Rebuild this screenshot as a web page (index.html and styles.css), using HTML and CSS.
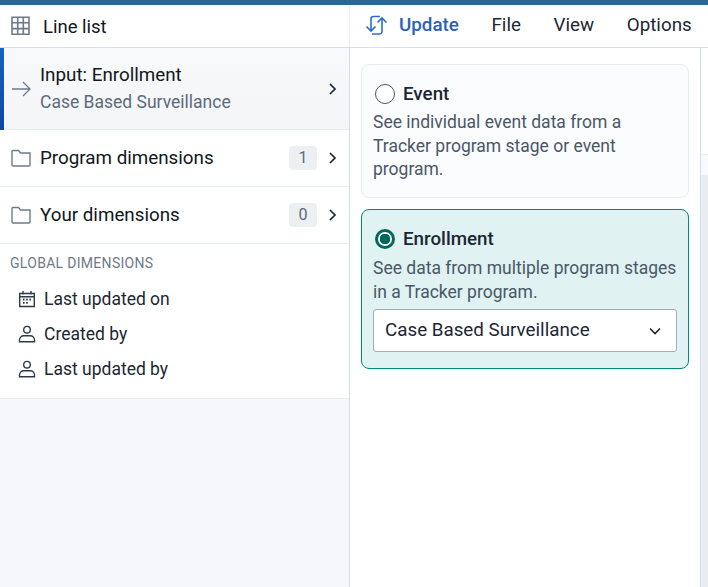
FILE: index.html
```html
<!DOCTYPE html>
<html>
<head>
<title>Line list</title>
<link rel="stylesheet" href="styles.css">
</head>
<body>
<div class="topbar"></div>
<div class="toolbar">
    <div class="toolbar-left">
        <svg class="icon-grid" width="20" height="20" viewBox="0 0 20 20" fill="none" stroke="#6e7a8a" stroke-width="1.6">
            <path d="M1 1.200h17v17H1zM1 6.800h17M1 12.600h17M6.700 1.200v17M12.300 1.200v17"/>
        </svg>
        <span class="app-name">Line list</span>
    </div>
    <div class="toolbar-right">
        <button class="menu-btn update">
            <svg width="24" height="24" viewBox="0 0 24 24" fill="none" stroke="#2c6ecb" stroke-width="1.6">
                <path d="M6 18V6a2.500 2.500 0 0 1 2.500-2.500H15M1.500 13.500L6 18l4.500-4.500M17 5v13.500a2.500 2.500 0 0 1-2.500 2.500H7M12.500 9.500L17 5l4.500 4.500"/>
            </svg>
            Update
        </button>
        <button class="menu-btn">File</button>
        <button class="menu-btn">View</button>
        <button class="menu-btn">Options</button>
    </div>
</div>
<div class="content">
    <div class="sidebar">
        <div class="row row-input">
            <svg class="row-icon" width="22" height="22" viewBox="0 0 22 22" fill="none" stroke="#6e7a8a" stroke-width="1.300">
                <path d="M1 11h18M12 4l7 7-7 7"/>
            </svg>
            <div class="row-text">
                <div class="row-title">Input: Enrollment</div>
                <div class="row-sub">Case Based Surveillance</div>
            </div>
            <svg class="chevron" width="10" height="14" viewBox="0 0 10 14" fill="none" stroke="#1b2733" stroke-width="1.700"><path d="M2 2l5 5-5 5"/></svg>
        </div>
        <div class="row row-dim">
            <svg class="row-icon" width="20" height="18" viewBox="0 0 20 18" fill="none" stroke="#6e7a8a" stroke-width="1.400"><path d="M1 16V2.500a1 1 0 0 1 1-1h5.500l2 2.500H19v12a1 1 0 0 1-1 1H2a1 1 0 0 1-1-1z"/></svg>
            <div class="row-text"><div class="row-title">Program dimensions</div></div>
            <span class="badge">1</span>
            <svg class="chevron" width="10" height="14" viewBox="0 0 10 14" fill="none" stroke="#1b2733" stroke-width="1.700"><path d="M2 2l5 5-5 5"/></svg>
        </div>
        <div class="row row-dim">
            <svg class="row-icon" width="20" height="18" viewBox="0 0 20 18" fill="none" stroke="#6e7a8a" stroke-width="1.400"><path d="M1 16V2.500a1 1 0 0 1 1-1h5.500l2 2.500H19v12a1 1 0 0 1-1 1H2a1 1 0 0 1-1-1z"/></svg>
            <div class="row-text"><div class="row-title">Your dimensions</div></div>
            <span class="badge">0</span>
            <svg class="chevron" width="10" height="14" viewBox="0 0 10 14" fill="none" stroke="#1b2733" stroke-width="1.700"><path d="M2 2l5 5-5 5"/></svg>
        </div>
        <div class="global">
            <div class="global-title">GLOBAL DIMENSIONS</div>
            <div class="global-item">
                <svg width="18" height="18" viewBox="0 0 18 18" fill="none" stroke="#2c3a49" stroke-width="1.400"><path d="M1.700 3.500h14.600v13H1.700zM1.700 6.800h14.600M5 1v3.500M13 1v3.500"/><path d="M5 9.500h1.600M8.200 9.500h1.600M11.400 9.500h1.600M5 12.800h1.600M8.200 12.800h1.600" stroke-width="1.800"/></svg>
                Last updated on
            </div>
            <div class="global-item">
                <svg width="18" height="18" viewBox="0 0 18 18" fill="none" stroke="#2c3a49" stroke-width="1.400"><circle cx="9" cy="4.700" r="3.300"/><path d="M1.500 16.800v-1.800c0-2.500 2-4.300 4.300-4.300h6.400c2.300 0 4.300 1.800 4.300 4.300v1.800z"/></svg>
                Created by
            </div>
            <div class="global-item">
                <svg width="18" height="18" viewBox="0 0 18 18" fill="none" stroke="#2c3a49" stroke-width="1.400"><circle cx="9" cy="4.700" r="3.300"/><path d="M1.500 16.800v-1.800c0-2.500 2-4.300 4.300-4.300h6.400c2.300 0 4.300 1.800 4.300 4.300v1.800z"/></svg>
                Last updated by
            </div>
        </div>
    </div>
    <div class="panel">
        <div class="card">
            <div class="card-head"><span class="radio"></span>Event</div>
            <div class="card-desc">See individual event data from a Tracker program stage or event program.</div>
        </div>
        <div class="card card-selected">
            <div class="card-head"><span class="radio radio-on"></span>Enrollment</div>
            <div class="card-desc">See data from multiple program stages in a Tracker program.</div>
            <div class="select">
                <span class="select-text">Case Based Surveillance</span>
                <svg width="14" height="10" viewBox="0 0 14 10" fill="none" stroke="#1b2733" stroke-width="1.600"><path d="M2 2.500l5 5 5-5"/></svg>
            </div>
        </div>
    </div>
    <div class="canvas">
        <div class="canvas-top"></div>
        <div class="canvas-band"></div>
        <div class="canvas-rest"></div>
    </div>
</div>
</body>
</html>
```

FILE: styles.css
```css
* {
    box-sizing: border-box;
}
html, body {
    height: 100%;
}
body {
    margin: 0;
    font-family: Roboto, "Liberation Sans", sans-serif;
    font-size: 18.8px;
    color: #1b2733;
    background-color: #fff;
    display: flex;
    flex-direction: column;
    overflow: hidden;
}
.topbar {
    height: 5px;
    background-color: #2b6793;
}
.toolbar {
    display: flex;
    height: 43px;
    border-bottom: 1px solid #d5dde8;
}
.toolbar-left {
    width: 350px;
    display: flex;
    align-items: center;
    border-right: 1px solid #e8edf2;
    padding-left: 11px;
    gap: 12px;
}
.app-name {
    color: #0f1720;
    font-size: 18.5px;
    padding-top: 2px;
}
.toolbar-right {
    flex: 1;
    display: flex;
    align-items: center;
    padding: 0 0 3px 15px;
    gap: 32.600px;
}
.menu-btn {
    border: 0;
    padding: 0;
    background: none;
    font-family: inherit;
    font-size: 18.8px;
    color: #1b2733;
    display: flex;
    align-items: center;
    gap: 10px;
}
.menu-btn.update {
    color: #2c62b5;
    font-weight: 500;
}
.content {
    flex: 1;
    display: flex;
    min-height: 0;
}
.sidebar {
    width: 350px;
    background-color: #f5f7fa;
    border-right: 1px solid #d5dde8;
}
.row {
    display: flex;
    align-items: center;
    background-color: #fff;
    border-bottom: 1px solid #e8edf2;
    padding: 0 11px;
}
.row-input {
    height: 82px;
    background: linear-gradient(#f8f9fa, #f3f5f7);
    border-left: 4px solid;
    border-image: linear-gradient(#1565c0, #0d47a1) 1;
    border-bottom: 0;
    box-shadow: inset 0 -1px 0 #e8edf2;
    padding-left: 7px;
}
.row-dim {
    height: 57px;
}
.row-icon {
    flex: none;
    margin-right: 9px;
}
.row-text {
    flex: 1;
}
.row-title {
    color: #0f1720;
}
.row-sub {
    margin-top: 6px;
    font-size: 17.5px;
    color: #5c6b7c;
}
.row-input .row-text {
    padding-bottom: 2px;
}
.row-input .row-icon {
    margin-right: 7px;
}
.badge {
    width: 28px;
    height: 24px;
    line-height: 24px;
    text-align: center;
    font-size: 16px;
    color: #5c6b7c;
    background-color: #ecf0f3;
    border-radius: 4px;
    margin-right: 11px;
}
.chevron {
    flex: none;
}
.global {
    background-color: #fff;
    border-bottom: 1px solid #e8edf2;
    padding: 11px 10px 12px;
}
.global-title {
    font-size: 14px;
    color: #6e7a8a;
    letter-spacing: 0.3px;
    margin-bottom: 10px;
}
.global-item {
    display: flex;
    align-items: center;
    gap: 8px;
    height: 35px;
    padding-left: 8px;
    font-size: 17.5px;
    color: #1b2733;
}
.panel {
    width: 351px;
    border-right: 1px solid #d5dde8;
    padding: 16px 11px;
}
.card {
    border: 1px solid #e8edf2;
    border-radius: 8px;
    background-color: #fbfcfd;
    padding: 17px 11px 0;
    margin-bottom: 11px;
    height: 134px;
}
.card-selected {
    height: 160px;
    background-color: #e0f2f1;
    border-color: #00897b;
}
.card-head {
    display: flex;
    align-items: center;
    gap: 8px;
    padding-left: 2px;
    font-weight: 500;
    line-height: 24px;
}
.radio {
    width: 20px;
    height: 20px;
    border: 1.500px solid #4a5768;
    border-radius: 50%;
    background-color: #fff;
}
.radio-on {
    border: 3px solid #00695c;
    background: radial-gradient(circle, #00695c 0 5px, #fff 5.500px);
}
.card-desc {
    font-size: 17.5px;
    color: #4a5768;
    line-height: 23.500px;
    margin-top: 5px;
}
.card-selected .card-desc {
    margin-top: 6px;
}
.select {
    display: flex;
    align-items: center;
    justify-content: space-between;
    height: 43px;
    margin-top: 5px;
    padding: 0 14px 0 11px;
    background-color: #fff;
    border: 1px solid #a0adba;
    border-radius: 3px;
}
.select-text {
    padding-bottom: 2px;
}
.canvas {
    flex: 1;
    display: flex;
    flex-direction: column;
}
.canvas-top {
    height: 106px;
    background-color: #fff;
}
.canvas-band {
    height: 21px;
    background-color: #f8f9fa;
    border-top: 1px solid #e8edf2;
}
.canvas-rest {
    flex: 1;
    background-color: #e8edf2;
}
```
